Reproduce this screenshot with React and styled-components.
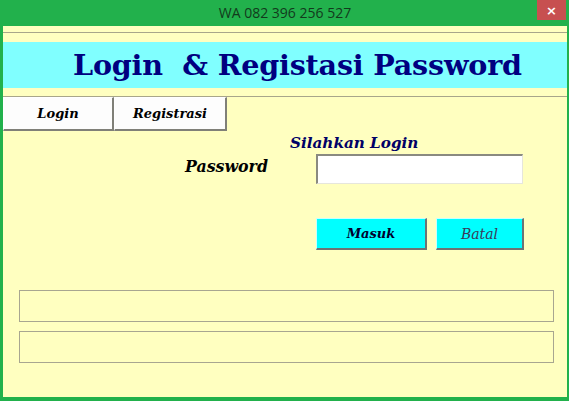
import styled, { createGlobalStyle } from "styled-components";

const GlobalStyle = createGlobalStyle`
  html, body {
    margin: 0;
    padding: 0;
    background: #22b14c;
  }
  * {
    box-sizing: border-box;
  }
`;

const serif = `"DejaVu Serif", "Liberation Serif", serif`;

const Window = styled.div`
  width: 569px;
  height: 401px;
  background-color: #22b14c;
  display: flex;
  flex-direction: column;
  padding: 0 2px 4px 3px;
`;

const TitleBar = styled.div`
  height: 26px;
  display: grid;
  grid-template-columns: 1fr auto 1fr;
  align-items: start;
`;

const Caption = styled.div`
  grid-column: 2;
  padding-top: 4px;
  font-family: "Open Sans", "Noto Sans", sans-serif;
  font-size: 14px;
  line-height: 18px;
  color: #123a1c;
`;

const CloseButton = styled.div`
  grid-column: 3;
  justify-self: end;
  width: 29px;
  height: 20px;
  margin-right: 1px;
  background-color: #c75050;
  color: #ffffff;
  display: flex;
  justify-content: center;
  align-items: center;
  font-family: "DejaVu Sans", sans-serif;
  font-size: 13px;
  font-weight: 700;
`;

const Body = styled.div`
  flex: 1;
  background-color: #ffffc0;
  display: flex;
  flex-direction: column;
  padding-top: 6px;
`;

const HeaderFrame = styled.div`
  border-top: 1px solid #a8a68a;
  border-bottom: 1px solid #a8a68a;
  padding: 9px 0 8px;
`;

const Banner = styled.div`
  height: 46px;
  background-color: #80ffff;
  display: flex;
  align-items: center;
  padding-left: 70px;
  font-family: ${serif};
  font-weight: 700;
  font-size: 28.6px;
  letter-spacing: -0.2px;
  color: #000080;
  white-space: pre;
`;

const Tabs = styled.div`
  display: flex;
`;

const Tab = styled.div`
  width: ${(props) => props.$width}px;
  height: 34px;
  background-color: #fdfdfd;
  border-top: 1px solid #ffffff;
  border-left: 1px solid #ffffff;
  border-right: 2px solid #808078;
  border-bottom: 2px solid #808078;
  display: flex;
  justify-content: center;
  align-items: center;
  font-family: ${serif};
  font-style: italic;
  font-weight: 700;
  font-size: 13px;
  color: #000000;
`;

const LoginPanel = styled.div`
  display: flex;
  flex-direction: column;
`;

const Heading = styled.div`
  margin-top: 1px;
  padding-left: 287px;
  font-family: ${serif};
  font-style: italic;
  font-weight: 700;
  font-size: 15.2px;
  line-height: 22px;
  color: #000066;
`;

const FieldRow = styled.div`
  display: flex;
  align-items: center;
  padding-left: 182px;
`;

const Label = styled.div`
  width: 131px;
  margin-top: -6px;
  font-family: ${serif};
  font-style: italic;
  font-weight: 700;
  font-size: 15.8px;
  color: #000000;
`;

const TextInput = styled.input`
  width: 207px;
  height: 30px;
  background-color: #ffffff;
  border-top: 2px solid #8a8a80;
  border-left: 2px solid #8a8a80;
  border-right: 1px solid #e6e6dc;
  border-bottom: 1px solid #e6e6dc;
  outline: none;
`;

const ButtonRow = styled.div`
  display: flex;
  gap: 9px;
  margin-top: 34px;
  padding-left: 313px;
`;

const Button = styled.div`
  width: ${(props) => props.$width}px;
  height: 32px;
  background-color: #00ffff;
  border-top: 1px solid #c8ffff;
  border-left: 1px solid #c8ffff;
  border-right: 2px solid #6c7474;
  border-bottom: 2px solid #6c7474;
  display: flex;
  justify-content: center;
  align-items: center;
  font-family: ${serif};
  font-style: italic;
  font-weight: ${(props) => (props.$bold ? 700 : 400)};
  font-size: ${(props) => (props.$bold ? 13 : 14)}px;
  color: ${(props) => (props.$bold ? "#00002e" : "#3a3a58")};
`;

const InfoBoxes = styled.div`
  display: flex;
  flex-direction: column;
  gap: 9px;
  margin-top: 40px;
  padding-left: 16px;
`;

const InfoBox = styled.div`
  width: 535px;
  height: 32px;
  border: 1px solid #a8a690;
`;

const App = () => {
  return (
    <>
      <GlobalStyle />
      <Window>
        <TitleBar>
          <Caption>WA 082 396 256 527</Caption>
          <CloseButton>×</CloseButton>
        </TitleBar>
        <Body>
          <HeaderFrame>
            <Banner>{"Login  & Registasi Password"}</Banner>
          </HeaderFrame>
          <Tabs>
            <Tab $width={111}>Login</Tab>
            <Tab $width={113}>Registrasi</Tab>
          </Tabs>
          <LoginPanel>
            <Heading>Silahkan Login</Heading>
            <FieldRow>
              <Label>Password</Label>
              <TextInput type="password" />
            </FieldRow>
            <ButtonRow>
              <Button $width={111} $bold>
                Masuk
              </Button>
              <Button $width={88}>Batal</Button>
            </ButtonRow>
          </LoginPanel>
          <InfoBoxes>
            <InfoBox />
            <InfoBox />
          </InfoBoxes>
        </Body>
      </Window>
    </>
  );
};

export default App;
